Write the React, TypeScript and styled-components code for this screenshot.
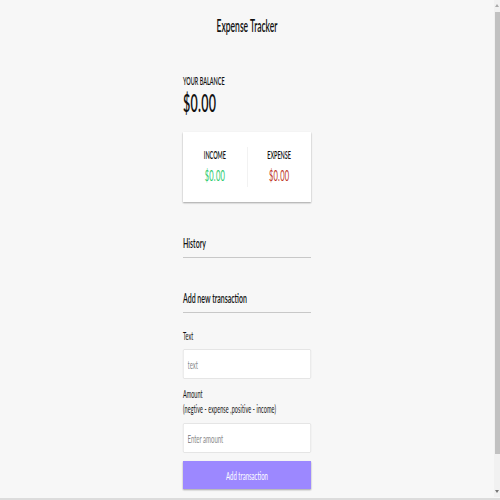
import styled, { createGlobalStyle } from 'styled-components';
import React from 'react';

// the page is drawn wide and squeezed horizontally to half
const SQUEEZE = 0.5;

const GlobalStyle = createGlobalStyle`
    html, body {
        margin: 0;
        padding: 0;
        height: 100%;
        overflow: hidden;
        background-color: #f7f7f7;
    }
    body {
        font-family: Lato, "Open Sans", sans-serif;
        color: #111;
    }
    * { box-sizing: border-box; }
`;

const Page = styled.div`
    width: ${494 / SQUEEZE}px;
    padding-top: 16px;
    transform: scaleX(${SQUEEZE});
    transform-origin: left top;
`;

const Title = styled.h2`
    margin: 0;
    font-size: 17px;
    line-height: 20px;
    font-weight: 600;
    text-align: center;
`;

const Container = styled.div`
    width: 256px;
    margin: 38px auto 0;
`;

const Caption = styled.h4`
    margin: 0;
    font-size: 11px;
    line-height: 14px;
    font-weight: 600;
    text-transform: uppercase;
`;

const Balance = styled.h1`
    margin: 0;
    font-size: 25px;
    line-height: 28px;
    font-weight: 600;
    letter-spacing: 0.5px;
`;

const Card = styled.div`
    display: flex;
    margin-top: 16px;
    padding: 15px 0;
    background: #fff;
    box-shadow: 0 1px 3px rgba(0, 0, 0, 0.12), 0 1px 2px rgba(0, 0, 0, 0.24);
`;

const Half = styled.div<{ $divided?: boolean }>`
    flex: 1;
    text-align: center;
    border-right: ${p => (p.$divided ? '1px solid #e4e4e4' : 'none')};

    ${Caption} {
        line-height: 16px;
    }
`;

const Money = styled.p<{ $tone: 'plus' | 'minus' }>`
    margin: 2px 0;
    font-size: 15px;
    line-height: 20px;
    letter-spacing: 0.5px;
    color: ${p => (p.$tone === 'plus' ? '#2ecc71' : '#c0392b')};
`;

const Heading = styled.h3<{ $gap: number }>`
    margin: ${p => p.$gap}px 0 0;
    padding-bottom: 5px;
    font-size: 14px;
    line-height: 18px;
    font-weight: 600;
    border-bottom: 1px solid #c8c8c8;
`;

const Form = styled.form`
    margin-top: 16px;
`;

const Label = styled.label`
    display: block;
    font-size: 11px;
    line-height: 14px;
`;

const Hint = styled.span`
    display: block;
    margin-top: 1px;
    letter-spacing: 0.2px;
`;

const Field = styled.input<{ $gap: number }>`
    display: block;
    width: 100%;
    height: 30px;
    margin: ${p => p.$gap}px 0 8px;
    padding: 0 8px;
    border: 1px solid #dedede;
    border-radius: 2px;
    background: #fff;
    font-family: inherit;
    font-size: 12px;
    outline: none;

    &::placeholder {
        color: #8a8a8a;
    }
`;

const Button = styled.button`
    display: block;
    width: 100%;
    height: 28px;
    border: 0;
    background-color: #9c88ff;
    color: #fff;
    font-family: inherit;
    font-size: 12px;
    box-shadow: 0 1px 3px rgba(0, 0, 0, 0.12), 0 1px 2px rgba(0, 0, 0, 0.24);
    cursor: pointer;
`;

// browser chrome seen in the screenshot
const ScrollTrack = styled.div`
    position: fixed;
    top: 0;
    right: 0;
    width: 6px;
    height: 497px;
    background: #f1f1f1;
`;

const ScrollThumb = styled.div`
    position: absolute;
    top: 12px;
    left: 1px;
    width: 5px;
    height: 442px;
    background: #c1c1c1;
`;

const Arrow = styled.div<{ $down?: boolean }>`
    position: absolute;
    left: 1px;
    ${p => (p.$down ? 'bottom: 4px;' : 'top: 4px;')}
    width: 0;
    height: 0;
    border-left: 2px solid transparent;
    border-right: 2px solid transparent;
    ${p => (p.$down ? 'border-top: 3px solid #777;' : 'border-bottom: 3px solid #aaa;')}
`;

const BottomBar = styled.div`
    position: fixed;
    left: 0;
    right: 0;
    bottom: 0;
    height: 2px;
    background: #dcdcdc;
`;

const App = () => {
    return (
        <React.Fragment>
            <GlobalStyle />
            <Page>
                <Title>Expense Tracker</Title>
                <Container>
                    <Caption>Your Balance</Caption>
                    <Balance>$0.00</Balance>

                    <Card>
                        <Half $divided>
                            <Caption>Income</Caption>
                            <Money $tone="plus">$0.00</Money>
                        </Half>
                        <Half>
                            <Caption>Expense</Caption>
                            <Money $tone="minus">$0.00</Money>
                        </Half>
                    </Card>

                    <Heading $gap={32}>History</Heading>

                    <Heading $gap={31}>Add new transaction</Heading>
                    <Form onSubmit={e => e.preventDefault()}>
                        <Label htmlFor="text">Text</Label>
                        <Field $gap={6} type="text" id="text" placeholder="text" />
                        <Label htmlFor="amount">
                            Amount
                            <Hint>(negtive - expense ,positive - income)</Hint>
                        </Label>
                        <Field $gap={7} type="number" id="amount" placeholder="Enter amount" />
                        <Button>Add transaction</Button>
                    </Form>
                </Container>
            </Page>
            <ScrollTrack>
                <Arrow />
                <ScrollThumb />
                <Arrow $down />
            </ScrollTrack>
            <BottomBar />
        </React.Fragment>
    );
};

export default App;
